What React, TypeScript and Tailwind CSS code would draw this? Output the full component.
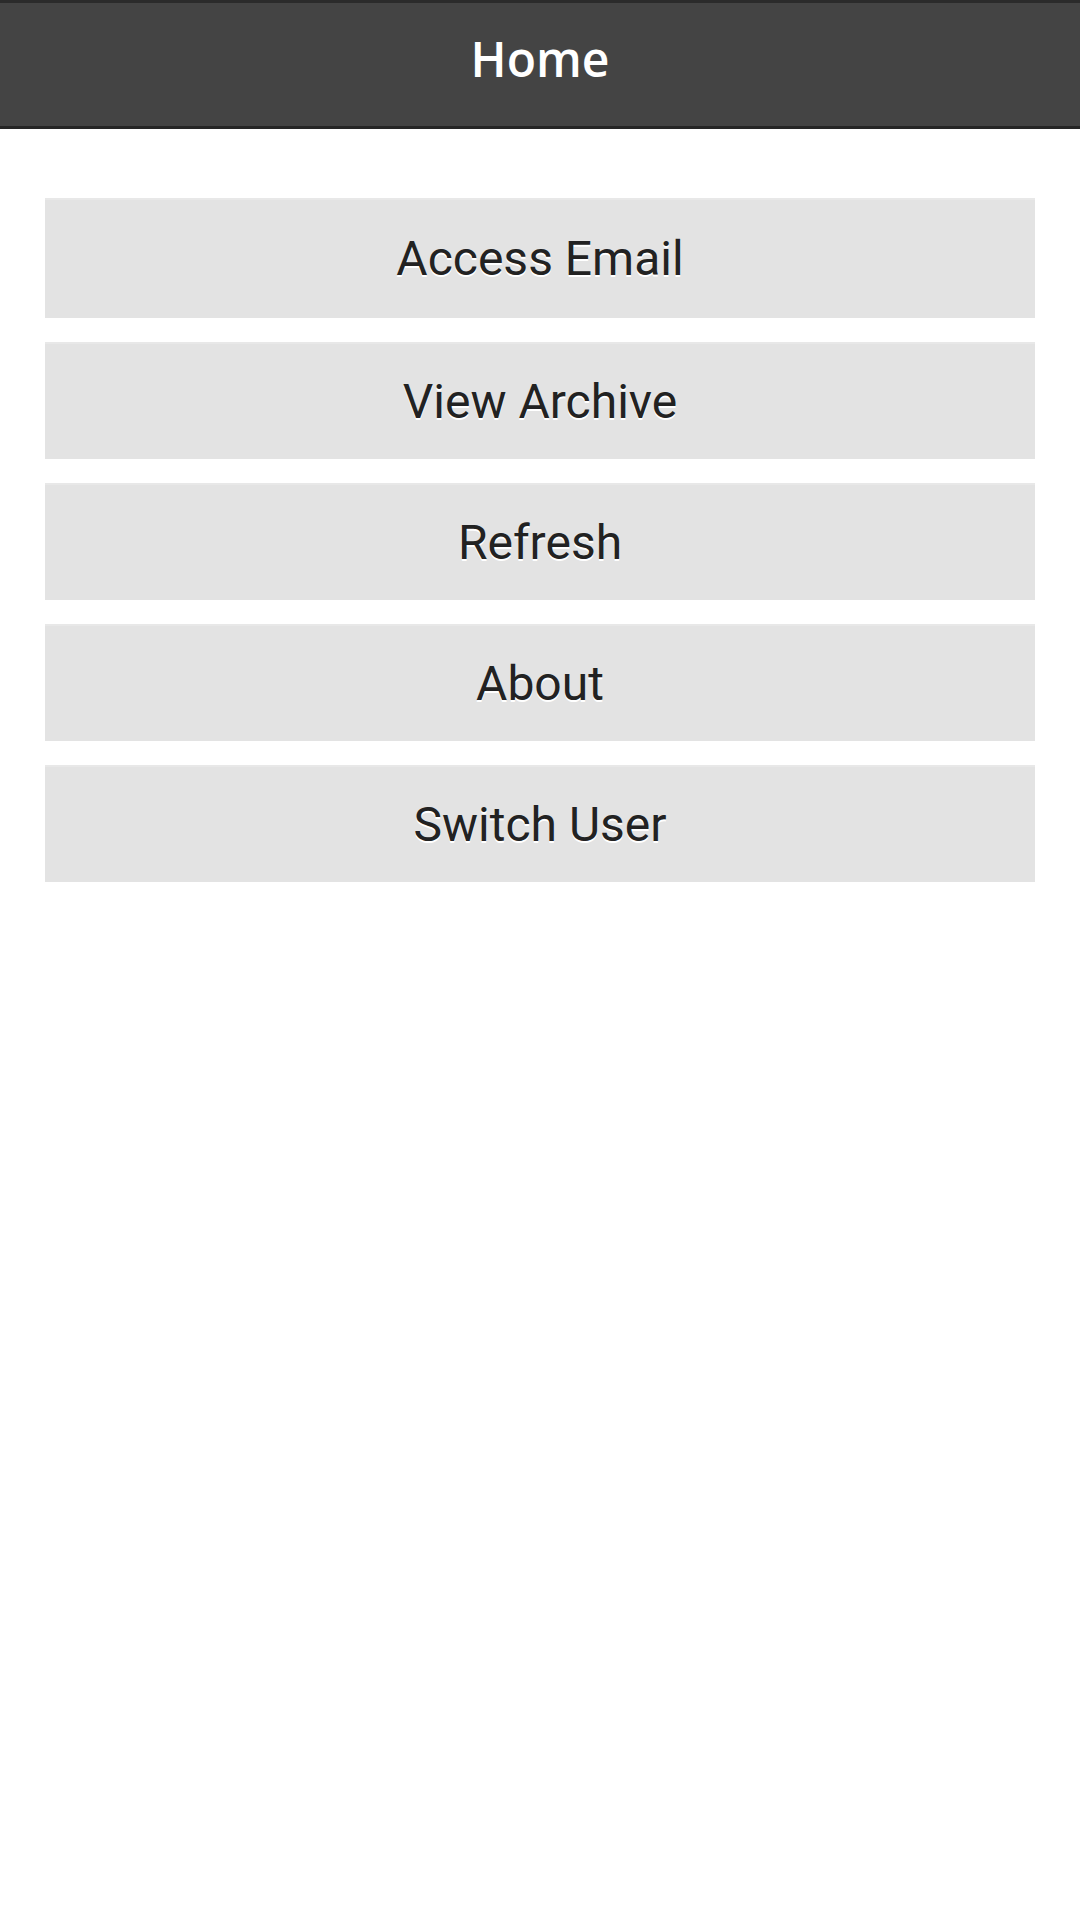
const items = ["Access Email", "View Archive", "Refresh", "About", "Switch User"];

export default function App() {
  return (
    <div className="min-h-[1920px] w-[1080px] bg-white">
      {/* Header */}
      <header className="h-[129px] border-t-[3px] border-b-[3px] border-t-[#2b2b2b] border-b-[#262626] bg-[#444444] flex items-center justify-center">
        <h1 className="text-white text-[48px] font-semibold leading-none pb-[11px] font-['Open_Sans',sans-serif]">
          Home
        </h1>
      </header>

      {/* Menu */}
      <nav className="flex flex-col gap-[24px] px-[45px] pt-[69px]">
        {items.map((label, i) => (
          <button
            key={label}
            className={`w-full border-t-[2px] border-t-[#e8e8e8] bg-[#e3e3e3] flex items-center justify-center text-[48px] text-[#222222] font-['Roboto',sans-serif] [text-shadow:0_1.5px_0_#ffffff] ${
              i === 0 ? "h-[120px]" : "h-[117px]"
            }`}
          >
            {label}
          </button>
        ))}
      </nav>
    </div>
  );
}
